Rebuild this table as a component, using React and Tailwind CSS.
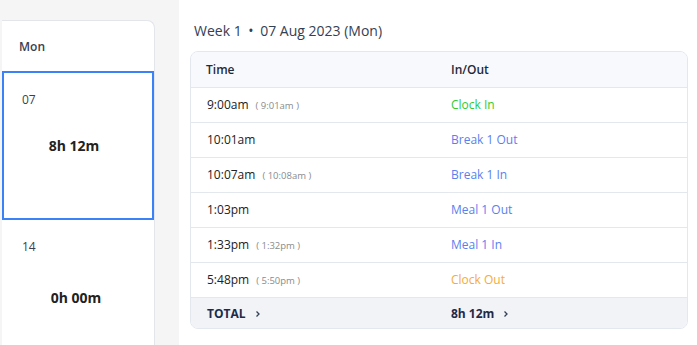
const rows = [
  { time: '9:00am', actual: '9:01am', label: 'Clock In', color: 'text-[#2fcc2f]' },
  { time: '10:01am', label: 'Break 1 Out', color: 'text-[#5a7ff0]' },
  { time: '10:07am', actual: '10:08am', label: 'Break 1 In', color: 'text-[#5a7ff0]' },
  { time: '1:03pm', label: 'Meal 1 Out', color: 'text-[#5a7ff0]' },
  { time: '1:33pm', actual: '1:32pm', label: 'Meal 1 In', color: 'text-[#5a7ff0]' },
  { time: '5:48pm', actual: '5:50pm', label: 'Clock Out', color: 'text-[#f5ab3c]' },
];

function Chevron() {
  return (
    <svg width="8" height="8" viewBox="0 0 8 8" className="ml-2 inline-block">
      <path d="M2.5 1.5 L5 4 L2.5 6.5" fill="none" stroke="#334155" strokeWidth="1.3" />
    </svg>
  );
}

export default function App() {
  return (
    <div className="flex h-[345px] w-[697px] overflow-hidden bg-white font-['Open_Sans',sans-serif] text-[#1f2937]">
      {/* ── Calendar column ─────────────────────────── */}
      <div className="w-[179px] shrink-0 bg-[#f5f5f5] pt-5">
        <div className="ml-[2px] h-full w-[153px] rounded-tr-lg border-r border-t border-[#e2e5ea] bg-white">
          <div className="h-[50px] pl-[17px] pt-[17px] text-[12px] font-semibold text-[#374151]">Mon</div>
          <div className="flex h-[149px] flex-col border-2 border-[#3b82f6] pl-[18px] pt-[19px]">
            <span className="text-[12px] leading-4 text-[#374151]">07</span>
            <span className="mt-[27px] pr-[26px] text-center text-[14px] font-bold text-[#222]">8h 12m</span>
          </div>
          <div className="flex flex-col pl-5 pt-[19px]">
            <span className="text-[12px] leading-4 text-[#374151]">14</span>
            <span className="mt-[32px] pr-[24px] text-center text-[14px] font-bold text-[#222]">0h 00m</span>
          </div>
        </div>
      </div>

      {/* ── Day detail ──────────────────────────────── */}
      <div className="flex-1 pl-[11px] pr-[9px] pt-[21px]">
        <div className="pl-[4px] text-[14px] leading-5 text-[#334155]">
          Week 1 <span className="mx-[3px]">•</span> 07 Aug 2023 (Mon)
        </div>
        <div className="mt-[10px] overflow-hidden rounded-lg border border-[#e3e7ee]">
          <div className="flex h-[35px] items-center bg-[#f7f9fc] text-[12px] font-semibold text-[#1e293b]">
            <div className="w-[260px] pl-[15px]">Time</div>
            <div>In/Out</div>
          </div>
          {rows.map((r) => (
            <div key={r.time} className="flex h-[35px] items-center border-t border-[#e3e7ee] text-[12px]">
              <div className="w-[260px] pl-[16px] text-[#222]">
                {r.time}
                {r.actual && (
                  <span className="ml-[7px] text-[9.5px] text-[#8b8b8b]">( {r.actual} )</span>
                )}
              </div>
              <div className={r.color}>{r.label}</div>
            </div>
          ))}
          <div className="flex h-[31px] items-center border-t border-[#e3e7ee] bg-[#f1f3f7] pt-[2px] text-[12px] font-bold text-[#1e2a4a]">
            <div className="flex w-[260px] items-center pl-[16px]">
              TOTAL
              <Chevron />
            </div>
            <div className="flex items-center">
              8h 12m
              <Chevron />
            </div>
          </div>
        </div>
      </div>
    </div>
  );
}
